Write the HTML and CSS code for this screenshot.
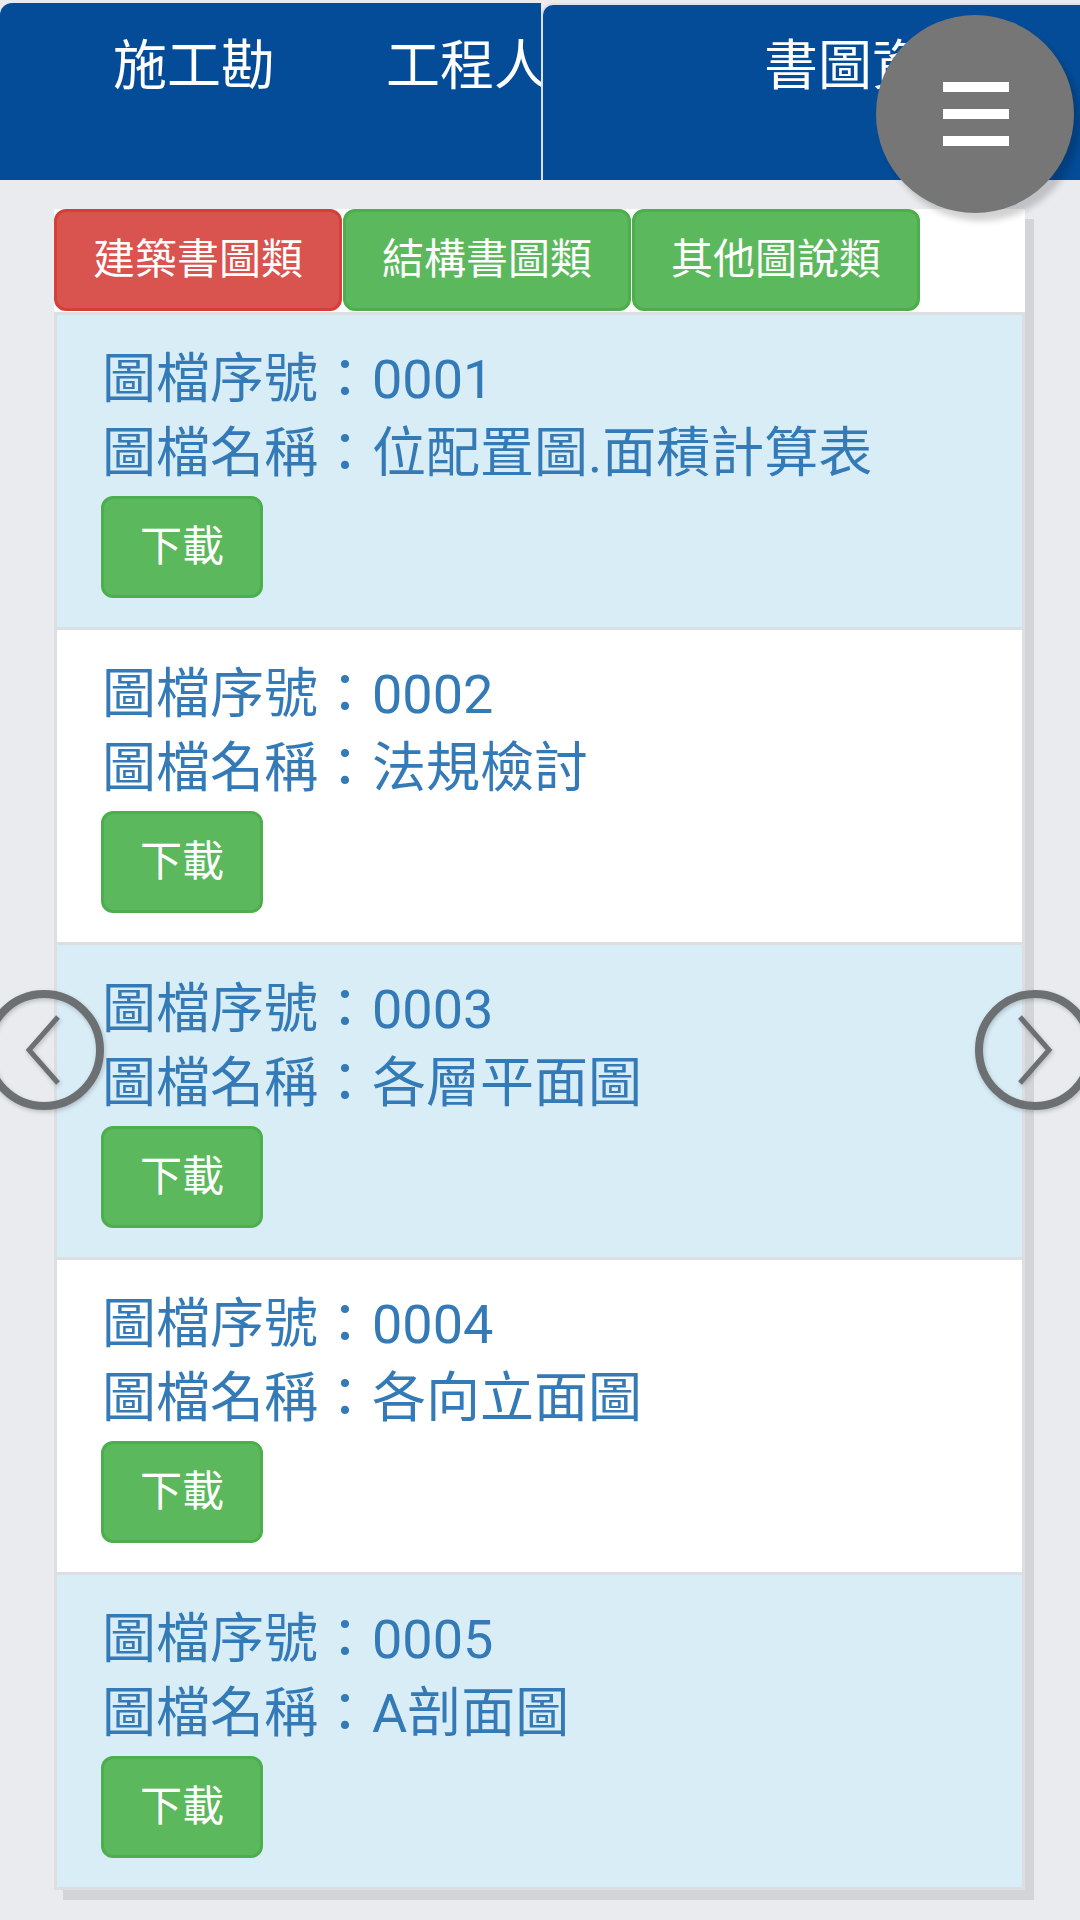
FILE: index.html
```html
<!DOCTYPE html>
<html lang="zh-Hant">
<head>
    <meta charset="UTF-8">
    <meta name="viewport" content="width=device-width, initial-scale=1.0">
    <title>書圖資料</title>
    <link rel="stylesheet" href="styles.css">
</head>
<body>

    <header class="top-tabs">
        <a class="tab tab-first">施工勘</a>
        <a class="tab tab-second">工程人</a>
        <a class="tab tab-active">書圖資料</a>
    </header>

    <button class="menu-button" aria-label="menu">
        <span></span><span></span><span></span>
    </button>

    <div class="panel">
        <div class="category-bar">
            <button class="btn btn-danger">建築書圖類</button>
            <button class="btn btn-success">結構書圖類</button>
            <button class="btn btn-success">其他圖說類</button>
        </div>

        <ul class="file-list">
            <li class="file-item info">
                <p>圖檔序號：0001</p>
                <p>圖檔名稱：位配置圖.面積計算表</p>
                <button class="btn btn-success">下載</button>
            </li>
            <li class="file-item">
                <p>圖檔序號：0002</p>
                <p>圖檔名稱：法規檢討</p>
                <button class="btn btn-success">下載</button>
            </li>
            <li class="file-item info">
                <p>圖檔序號：0003</p>
                <p>圖檔名稱：各層平面圖</p>
                <button class="btn btn-success">下載</button>
            </li>
            <li class="file-item">
                <p>圖檔序號：0004</p>
                <p>圖檔名稱：各向立面圖</p>
                <button class="btn btn-success">下載</button>
            </li>
            <li class="file-item info">
                <p>圖檔序號：0005</p>
                <p>圖檔名稱：A剖面圖</p>
                <button class="btn btn-success">下載</button>
            </li>
        </ul>
    </div>

    <!-- page arrows -->
    <a class="nav-arrow nav-prev">
        <svg width="120" height="120" viewBox="0 0 120 120">
            <circle cx="60" cy="60" r="56" fill="none" stroke="#6c7073" stroke-width="8"/>
            <polyline points="74,27 45,60 74,93" fill="none" stroke="#6c7073" stroke-width="5"/>
        </svg>
    </a>
    <a class="nav-arrow nav-next">
        <svg width="120" height="120" viewBox="0 0 120 120">
            <circle cx="60" cy="60" r="56" fill="none" stroke="#6c7073" stroke-width="8"/>
            <polyline points="45,27 74,60 45,93" fill="none" stroke="#6c7073" stroke-width="5"/>
        </svg>
    </a>

</body>
</html>
```

FILE: styles.css
```css
/* Global Styles */
body {
    font-family: Roboto, "Noto Sans CJK TC", sans-serif;
    margin: 0;
    padding: 0;
    background-color: #e9ebee;
    width: 1080px;
    height: 1920px;
    overflow: hidden;
    position: relative;
}

p {
    margin: 0;
}

/* Header Tabs */
.top-tabs {
    display: flex;
    height: 177px;
    padding-top: 3px;
    overflow: hidden;
    white-space: nowrap;
}

.tab {
    background-color: #044c97;
    color: #fff;
    font-size: 54px;
    line-height: 1;
    padding-top: 37px;
    box-sizing: border-box;
    flex-shrink: 0;
}

.tab-first {
    width: 386px;
    padding-left: 113px;
    border-top-left-radius: 12px;
}

.tab-second {
    width: 155px;
}

.tab-active {
    width: 600px;
    padding-left: 221px;
    border: 2px solid #dce2ec;
    border-bottom: none;
    border-radius: 12px 12px 0 0;
    padding-top: 35px;
    position: relative;
}

/* Floating menu */
.menu-button {
    position: absolute;
    left: 876px;
    top: 15px;
    width: 198px;
    height: 198px;
    border-radius: 50%;
    border: none;
    background-color: #767676;
    box-shadow: 6px 8px 6px rgba(0, 0, 0, 0.18);
    display: flex;
    flex-direction: column;
    align-items: center;
    justify-content: center;
    gap: 17px;
    padding: 0 0 0 2px;
    z-index: 2;
}

.menu-button span {
    display: block;
    width: 66px;
    height: 10px;
    background-color: #fff;
}

/* Panel */
.panel {
    margin: 29px 0 0 54px;
    width: 971px;
    background-color: #fff;
    box-shadow: 9px 10px 0 #d2d4d8;
}

.category-bar {
    display: flex;
    gap: 1px;
    height: 103px;
}

.btn {
    font-family: Roboto, "Noto Sans CJK TC", sans-serif;
    font-size: 42px;
    line-height: 60px;
    height: 102px;
    padding: 0 36px;
    border: 3px solid;
    border-radius: 12px;
    color: #fff;
    cursor: pointer;
    box-sizing: border-box;
}

.btn-danger {
    background-color: #d9534f;
    border-color: #d43f3a;
}

.btn-success {
    background-color: #5cb85c;
    border-color: #4cae4c;
}

.category-bar .btn {
    width: 288px;
}

/* File list */
.file-list {
    list-style: none;
    margin: 0;
    padding: 0;
}

.file-item {
    background-color: #fff;
    border: 3px solid #dcdfe2;
    padding: 28px 30px 29px 44px;
    margin-bottom: -3px;
    color: #337ab7;
    font-size: 54px;
    line-height: 74px;
}

.file-item p {
    padding-left: 1px;
}

.file-item.info {
    background-color: #d9edf7;
}

.file-item .btn {
    margin-top: 5px;
    display: block;
}

.file-item:last-child {
    margin-bottom: 0;
}

/* Page arrows */
.nav-arrow {
    position: absolute;
    top: 990px;
    width: 120px;
    height: 120px;
    filter: drop-shadow(1px 2px 2px rgba(0, 0, 0, 0.2));
}

.nav-prev {
    left: -16px;
}

.nav-next {
    left: 975px;
}
```
